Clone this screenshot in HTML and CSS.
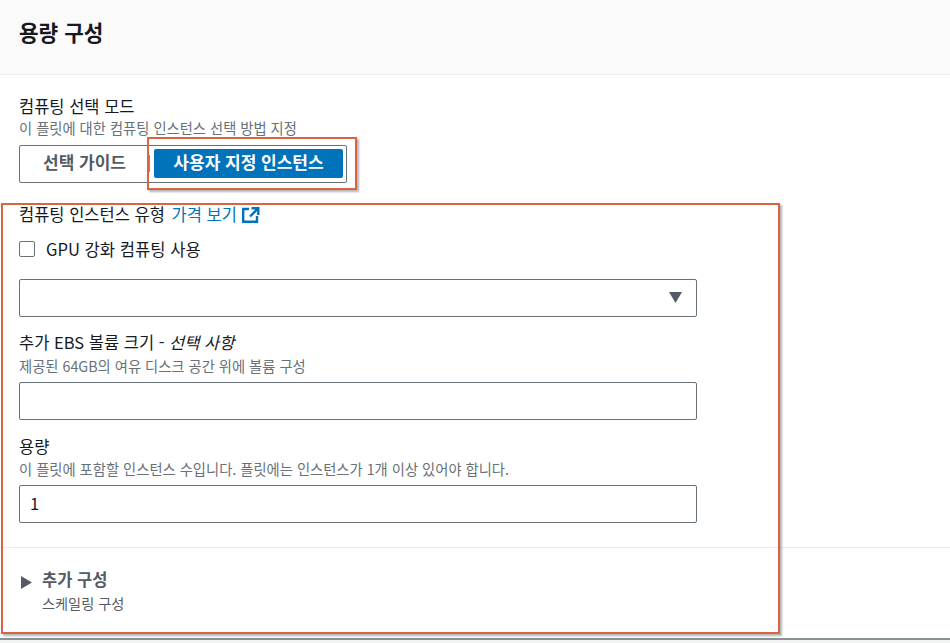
FILE: index.html
```html
<!DOCTYPE html>
<html lang="ko">
<head>
    <meta charset="UTF-8">
    <title>용량 구성</title>
    <link rel="stylesheet" href="styles.css">
</head>
<body>
    <section class="card">
        <header class="card-head"><h2>용량 구성</h2></header>
        <section class="card-body">
            <div class="label">컴퓨팅 선택 모드</div>
            <div class="hint mode-hint">이 플릿에 대한 컴퓨팅 인스턴스 선택 방법 지정</div>
            <div class="segment">
                <button class="seg-btn">선택 가이드</button>
                <span class="seg-line"></span>
                <button class="seg-btn seg-active">사용자 지정 인스턴스</button>
            </div>

            <div class="label type-label">컴퓨팅 인스턴스 유형 <a class="link" href="#">가격 보기
                <svg class="ext" width="18" height="16" viewBox="0 0 18 16"><path d="M7 2H1.2v12.8H15V9" fill="none" stroke="#0073bb" stroke-width="2.4"/><path d="M9.5 1.2h6.8V8M16 1.5L8 9.5" fill="none" stroke="#0073bb" stroke-width="2.4"/></svg></a></div>
            <label class="check"><span class="box"></span>GPU 강화 컴퓨팅 사용</label>
            <div class="field select"><svg width="13" height="11" viewBox="0 0 13 11"><path d="M0 0h13L6.500 11z" fill="#545b64"/></svg></div>

            <div class="label ebs-label">추가 EBS 볼륨 크기 - <i>선택 사항</i></div>
            <div class="hint ebs-hint">제공된 64GB의 여유 디스크 공간 위에 볼륨 구성</div>
            <div class="field"></div>

            <div class="label cap-label">용량</div>
            <div class="hint cap-hint">이 플릿에 포함할 인스턴스 수입니다. 플릿에는 인스턴스가 1개 이상 있어야 합니다.</div>
            <div class="field">1</div>
        </section>
        <section class="more">
            <svg class="caret" width="11" height="13" viewBox="0 0 11 13"><path d="M0 0l11 6.5L0 13z" fill="#545b64"/></svg>
            <div>
                <div class="more-title">추가 구성</div>
                <div class="more-sub">스케일링 구성</div>
            </div>
        </section>
    </section>
    <div class="mark mark-seg"></div>
    <div class="mark mark-form"></div>
</body>
</html>
```

FILE: styles.css
```css
*{margin: 0;padding: 0;box-sizing: border-box;}
body{
    width: 950px;height: 643px;overflow: hidden;position: relative;
    background-color: #f2f3f3;color: #16191f;
    font-family: "Noto Sans CJK KR", "Noto Sans", sans-serif;
}
.card{height: 640px;background-color: #fff;border-bottom: 2px solid #879196;}
.card-head{height: 75px;padding: 17px 19px 0;background-color: #fafafa;border-bottom: 1px solid #eaeded;}
.card-head h2{font-size: 21.3px;line-height: 30px;font-weight: 700;}
.card-body{height: 473px;padding: 19px 19px 0;border-bottom: 1px solid #eaeded;}
.label{font-size: 16.5px;line-height: 24px;}
.hint{font-size: 14.3px;line-height: 18px;color: #687078;}
.mode-hint{margin-top: 1px;}
.ebs-hint{margin-top: 3px;}
.cap-hint{margin-top: 2px;}
.segment{
    width: 328px;height: 38px;margin-top: 8px;padding: 3px 3px 4px 0;
    display: flex;align-items: center;
    border: 1px solid #687078;border-radius: 2px;
}
.seg-btn{
    height: 29px;padding-bottom: 5px;border: none;background: none;border-radius: 2px;
    font-family: inherit;font-size: 17px;font-weight: 700;color: #545b64;
}
.seg-btn:first-child{width: 129px;}
.seg-line{width: 1px;height: 17px;background-color: #879196;margin-right: 4px;}
.seg-active{width: 189px;background-color: #0073bb;color: #fff;}
.type-label{margin-top: 19px;}
.link{margin-left: 2px;color: #0073bb;text-decoration: none;}
.ext{vertical-align: -2px;margin-left: 1px;}
.check{display: flex;align-items: center;margin-top: 11px;font-size: 16.6px;line-height: 24px;}
.box{width: 16px;height: 16px;margin-right: 11px;border: 1px solid #687078;border-radius: 2px;}
.field{
    width: 678px;height: 38px;padding: 0 10px 2px;
    display: flex;align-items: center;
    border: 1px solid #687078;border-radius: 2px;font-size: 16.5px;
}
.select{margin-top: 18px;padding: 0 14px 2px 0;justify-content: flex-end;}
.ebs-label{margin-top: 13px;}
.hint + .field{margin-top: 7px;}
.cap-label{margin-top: 14px;}
.more{display: flex;align-items: flex-start;padding: 20px 21px 0;}
.caret{margin: 8px 10px 0 0;}
.more-title{font-size: 16.5px;line-height: 22px;font-weight: 700;color: #545b64;}
.more-sub{font-size: 14.2px;line-height: 20px;margin-top: 3px;color: #545b64;}
.mark{position: absolute;border: 2px solid #d9643f;box-shadow: 2px 2px 2px rgba(0,0,0,.3);}
.mark-seg{left: 147px;top: 137px;width: 210px;height: 53px;}
.mark-form{left: 1px;top: 203px;width: 779px;height: 431px;}
```
